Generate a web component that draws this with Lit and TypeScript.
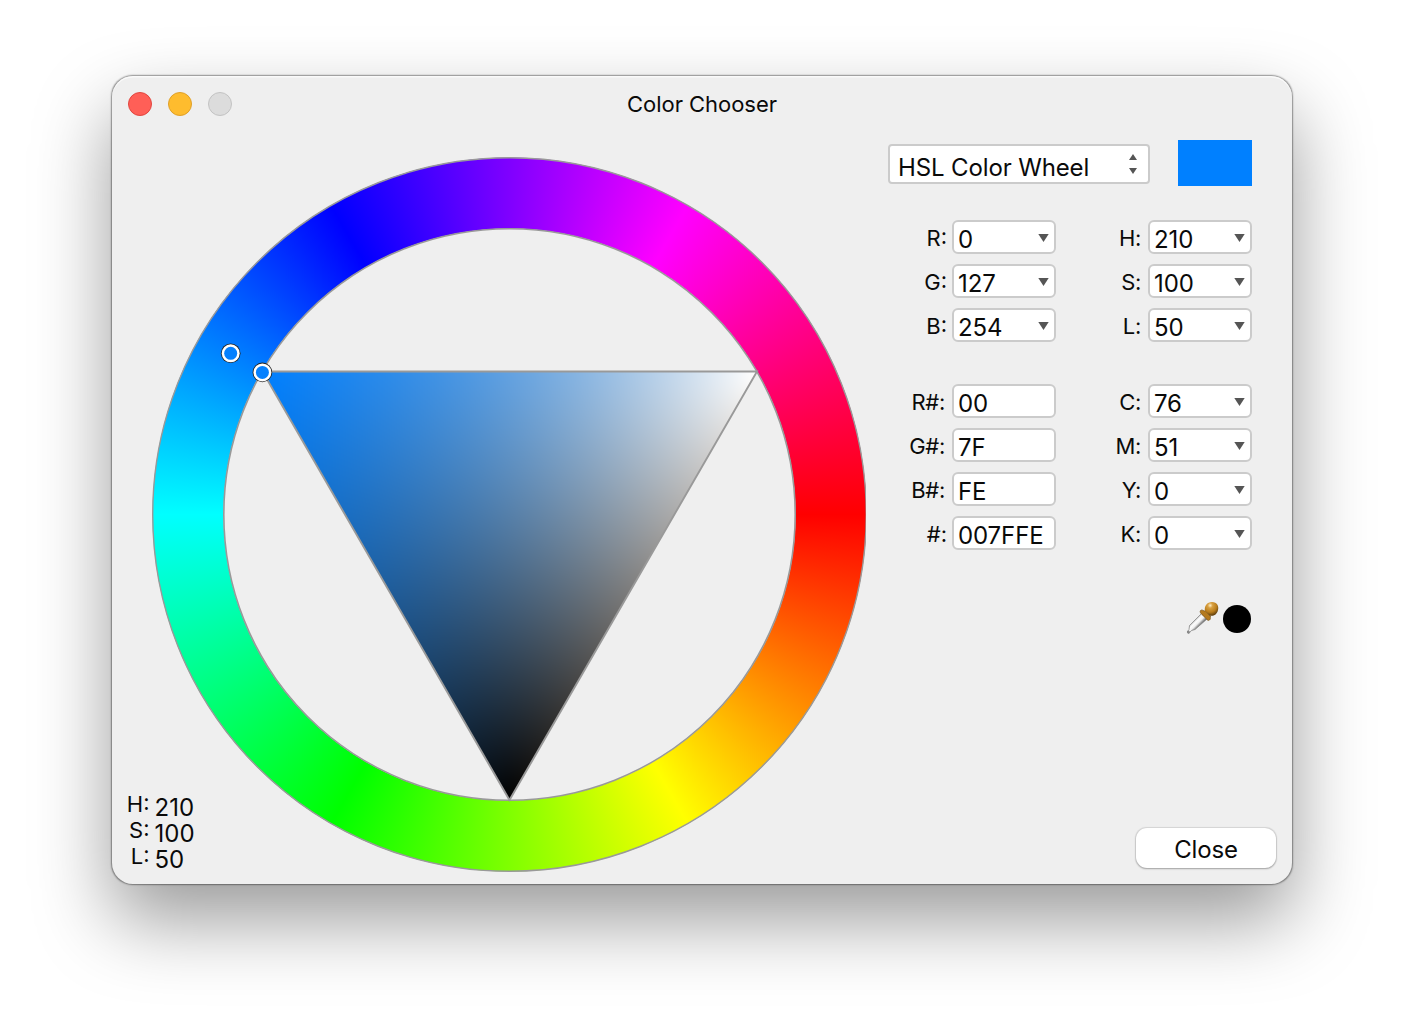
import { LitElement, html, css, svg, nothing } from "lit";
import { customElement, property, query } from "lit/decorators.js";

@customElement("value-field")
class ValueField extends LitElement {
  @property() label = "";
  @property() value = "";
  @property({ type: Boolean }) menu = false;

  static styles = css`
    :host { display: flex; justify-content: flex-end; height: 34px; }
    .label {
      font-size: 22px; line-height: 37px; color: #0a0a0a; white-space: nowrap;
      margin-right: 5px;
    }
    .label.tight { margin-right: 7px; letter-spacing: -0.3px; }
    .box {
      box-sizing: border-box; width: 104px; height: 34px; flex: none;
      border: 2px solid #cbcbcb; border-radius: 6px; background: #fff;
      display: flex; justify-content: space-between; padding: 0 5.5px 0 4px;
    }
    .value {
      font-size: 24px; line-height: 30px; padding-top: 3px; color: #0a0a0a;
      letter-spacing: -0.1px; font-feature-settings: "calt" 0;
    }
    .arrow { width: 11px; height: 8px; margin-top: 12px; fill: #555; }
  `;

  render() {
    const tight = this.menu ? this.dataset.side === "right" : this.label.length > 2;
    return html`
      <span class="label ${tight ? "tight" : ""}">${this.label}</span>
      <span class="box">
        <span class="value">${this.value}</span>
        ${this.menu
          ? html`<svg class="arrow" viewBox="0 0 11 8"><path d="M0.300 0H10.700L5.500 8Z" /></svg>`
          : nothing}
      </span>
    `;
  }
}

@customElement("color-wheel")
class ColorWheel extends LitElement {
  @property({ type: Number }) hue = 210;
  @query("canvas") canvas!: HTMLCanvasElement;

  static styles = css`
    :host { display: grid; width: 714px; height: 715px; }
    .ring, .shade, .lines { grid-area: 1 / 1; width: 714px; height: 715px; display: block; }
    .ring {
      background: conic-gradient(from 90deg at 357.5px 357.5px, #f00, #ff0, #0f0, #0ff, #00f, #f0f, #f00);
      -webkit-mask: radial-gradient(circle at 357.5px 357.5px, transparent 285.5px, #000 286.5px, #000 356.5px, transparent 357.5px);
      mask: radial-gradient(circle at 357.5px 357.5px, transparent 285.5px, #000 286.5px, #000 356.5px, transparent 357.5px);
    }
    .shade { clip-path: polygon(110.5px 214.5px, 605px 214.5px, 357.5px 643px); }
    .lines { z-index: 1; }
  `;

  firstUpdated() {
    const ctx = this.canvas.getContext("2d")!;
    const w = 714, h = 715;
    const img = ctx.createImageData(w, h);
    const A = [110.5, 214.5], W = [605, 214.5], K = [357.5, 643];
    const det = (W[1] - K[1]) * (A[0] - K[0]) + (K[0] - W[0]) * (A[1] - K[1]);
    const tone = [0, 8, 4].map((n) => {
      const k = (n + this.hue / 30) % 12;
      return -Math.max(-1, Math.min(k - 3, 9 - k, 1));
    });
    for (let y = 210; y < 648; y++) {
      for (let x = 104; x < 612; x++) {
        // chroma falls off toward the white-black edge; lightness follows
        // the distance ratio between the black and white corners
        const a = ((W[1] - K[1]) * (x - K[0]) + (K[0] - W[0]) * (y - K[1])) / det;
        const chroma = a * 1.008 - 0.008;
        const dk = Math.hypot(x - K[0], y - K[1]);
        const dw = Math.hypot(x - W[0], y - W[1]);
        const l = dk / (dk + dw);
        const i = (y * w + x) * 4;
        tone.forEach((t, j) => {
          img.data[i + j] = 255 * (l + (chroma / 2) * t);
        });
        img.data[i + 3] = 255;
      }
    }
    ctx.putImageData(img, 0, 0);
  }

  marker(x: number, y: number) {
    return svg`
      <circle cx=${x} cy=${y} r="9.8" fill="#222" />
      <circle cx=${x} cy=${y} r="9" fill="#fff" />
      <circle cx=${x} cy=${y} r="6.5" fill="#0480fe" />`;
  }

  render() {
    return html`
      <div class="ring"></div>
      <canvas class="shade" width="714" height="715"></canvas>
      <svg class="lines" viewBox="0 0 714 715" fill="none" stroke="#999">
        <circle cx="357.5" cy="357.5" r="356.8" stroke-width="1.4" />
        <circle cx="357.5" cy="357.5" r="285.7" stroke-width="1.6" />
        <path d="M110.5 214.5H605L357.5 643Z" stroke-width="1.9" />
        <g stroke="none">${this.marker(78.7, 196.3)}${this.marker(110.4, 215.4)}</g>
      </svg>
    `;
  }
}

@customElement("app-root")
class AppRoot extends LitElement {
  static styles = css`
    :host {
      display: block; box-sizing: border-box; width: 1404px; height: 1032px;
      padding: 76px 112px 0; background: #fff; overflow: hidden;
      font-family: Inter, "Liberation Sans", sans-serif; color: #0a0a0a;
    }
    .window {
      width: 1180px; height: 808px; border-radius: 21px; background: #efefef;
      display: flex; flex-direction: column;
      box-shadow: inset 0 1.5px 0 rgba(255, 255, 255, 0.7), 0 0 1.5px 0.5px rgba(0, 0, 0, 0.4), 0 36px 78px rgba(0, 0, 0, 0.4);
    }
    .bar { display: grid; grid-template-columns: 1fr auto 1fr; height: 56px; align-items: center; }
    .lights { display: flex; gap: 16px; padding-left: 16px; }
    .light { box-sizing: border-box; width: 24px; height: 24px; border-radius: 50%; border: 1px solid; }
    .red { background: #ff5f57; border-color: #e2463f; }
    .yellow { background: #febc2e; border-color: #e0a028; }
    .gray { background: #dcdcdc; border-color: #c3c3c3; }
    .title { font-size: 22px; line-height: 56px; letter-spacing: -0.04px; }
    .body { display: flex; height: 752px; }
    .left { display: grid; width: 776px; height: 752px; flex: none; }
    .wheel { grid-area: 1 / 1; margin: 25px 0 0 40px; }
    .readout { grid-area: 1 / 1; align-self: end; justify-self: start; margin: 0 0 15px 0; width: 90px; }
    .row { display: flex; height: 26px; line-height: 26px; gap: 5px; }
    .row-label { width: 37.5px; text-align: right; font-size: 22px; }
    .row-value { font-size: 24px; padding-top: 4px; letter-spacing: 0; font-feature-settings: "calt" 0; }
    .right { width: 388px; display: flex; flex-direction: column; padding-top: 8px; box-sizing: border-box; }
    .top { display: flex; justify-content: space-between; width: 364px; height: 46px; }
    .select {
      box-sizing: border-box; width: 262px; height: 40px; margin-top: 4px; border: 2px solid #cbcbcb;
      border-radius: 4px; background: #fff; display: flex; justify-content: space-between; padding: 0 11px 0 8px;
    }
    .select-text { font-size: 24px; line-height: 36px; padding-top: 4px; white-space: nowrap; letter-spacing: -0.13px; }
    .updown { width: 8px; height: 20px; margin-top: 8px; fill: #555; }
    .swatch { width: 74px; height: 46px; background: #0080ff; }
    .fields { display: grid; grid-template-columns: 168px 196px; row-gap: 10px; margin-top: 34px; }
    .fields.second { margin-top: 42px; }
    .tools { display: flex; width: 364px; justify-content: flex-end; margin-top: 50px; gap: 3px; }
    .dropper { width: 34px; height: 36px; }
    .dot { width: 28px; height: 28px; border-radius: 50%; background: #000; margin-top: 5px; margin-right: 1px; }
    .close {
      align-self: flex-end; margin: auto 0 16px 0; width: 140px; height: 40px; border-radius: 11px;
      background: #fff; text-align: center; font-size: 24px; line-height: 44px; letter-spacing: -0.15px;
      box-shadow: 0 0 1px 0.5px rgba(0, 0, 0, 0.1), 0 1px 2px rgba(0, 0, 0, 0.25);
    }
  `;

  first = [["R:", "0"], ["H:", "210"], ["G:", "127"], ["S:", "100"], ["B:", "254"], ["L:", "50"]];
  second = [["R#:", "00"], ["C:", "76"], ["G#:", "7F"], ["M:", "51"], ["B#:", "FE"], ["Y:", "0"], ["#:", "007FFE"], ["K:", "0"]];

  field([label, value]: string[], i: number, menu: boolean) {
    return html`<value-field data-side=${i % 2 ? "right" : "left"} .label=${label} .value=${value} .menu=${menu}></value-field>`;
  }

  render() {
    return html`
      <div class="window">
        <div class="bar">
          <div class="lights">
            <span class="light red"></span><span class="light yellow"></span><span class="light gray"></span>
          </div>
          <div class="title">Color Chooser</div>
        </div>
        <div class="body">
          <div class="left">
            <color-wheel class="wheel" .hue=${210}></color-wheel>
            <div class="readout">
              ${[["H:", "210"], ["S:", "100"], ["L:", "50"]].map(
                ([k, v]) => html`<div class="row"><span class="row-label">${k}</span><span class="row-value">${v}</span></div>`
              )}
            </div>
          </div>
          <div class="right">
            <div class="top">
              <div class="select">
                <span class="select-text">HSL Color Wheel</span>
                <svg class="updown" viewBox="0 0 8 20"><path d="M0 6L4 0L8 6ZM0 14H8L4 20Z" /></svg>
              </div>
              <div class="swatch"></div>
            </div>
            <div class="fields">${this.first.map((f, i) => this.field(f, i, true))}</div>
            <div class="fields second">${this.second.map((f, i) => this.field(f, i, i % 2 === 1))}</div>
            <div class="tools">
              <svg class="dropper" viewBox="0 0 34 36">
                <defs>
                  <linearGradient id="glass" gradientUnits="userSpaceOnUse" x1="8" y1="20" x2="14" y2="26">
                    <stop offset="0" stop-color="#aaa" /><stop offset="0.3" stop-color="#fff" />
                    <stop offset="0.6" stop-color="#eee" /><stop offset="1" stop-color="#555" />
                  </linearGradient>
                  <radialGradient id="bulb" cx="0.4" cy="0.25" r="0.75">
                    <stop offset="0" stop-color="#fff0c8" /><stop offset="0.25" stop-color="#d9a040" />
                    <stop offset="0.65" stop-color="#b97d1d" /><stop offset="1" stop-color="#5d3d0b" />
                  </radialGradient>
                </defs>
                <path d="M15.500 13.500L21 19L9 29.500L5.500 30.500L2.800 33.500L1.200 32L3 29.500L3.500 25.500Z" fill="url(#glass)" stroke="#888" stroke-width="0.8" />
                <circle cx="2.400" cy="32" r="1.500" fill="#888" />
                <path d="M14.500 10.500C16 9 17.500 11 19 11L24.500 16C24 18 25 19 23.500 20C21.500 21.500 20.500 18.500 18.500 17C16.500 15 13 12.500 14.500 10.500Z" fill="#b47a1e" stroke="#6b480f" stroke-width="0.6" />
                <path d="M19 11C18 6 21 2 26 2C31 2 33 6 32 10C31 15 27 16.500 23.500 15.500Z" fill="url(#bulb)" />
              </svg>
              <span class="dot"></span>
            </div>
            <div class="close" role="button">Close</div>
          </div>
        </div>
      </div>
    `;
  }
}
